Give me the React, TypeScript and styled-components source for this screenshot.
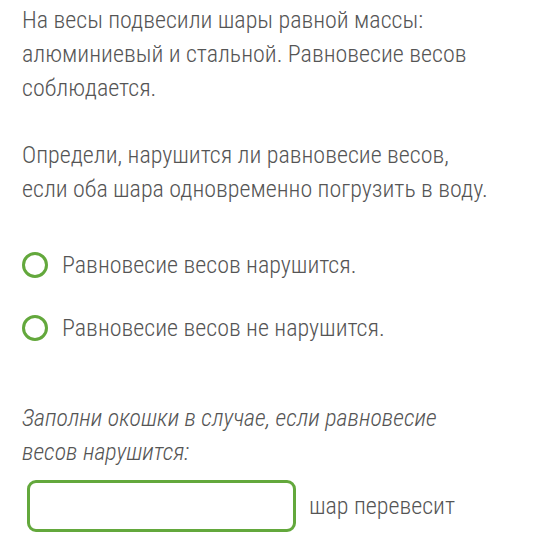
import React from "react";
import styled, { createGlobalStyle } from "styled-components";

const Global = createGlobalStyle`
  html, body { margin: 0; padding: 0; background: #fff; }
  body { font-family: Roboto, "Noto Sans", sans-serif; color: #555; }
`;

const Page = styled.div`
  width: 539px;
  height: 540px;
  box-sizing: border-box;
  padding: 3px 10px 0 22px;
  overflow: hidden;
  font-weight: 300;
  font-stretch: 75%;
  font-size: 24px;
  line-height: 34px;
`;

const Para = styled.p<{ $italic?: boolean; $mb?: number }>`
  margin: 0 0 ${(p) => p.$mb ?? 33}px 0;
  font-style: ${(p) => (p.$italic ? "italic" : "normal")};
`;

const Options = styled.div`
  display: flex;
  flex-direction: column;
  gap: 29px;
  margin: 42px 0 56px 0;
`;

const Option = styled.label`
  display: flex;
  align-items: center;
  gap: 14px;
  height: 34px;
`;

const Radio = styled.span`
  width: 26px;
  height: 26px;
  box-sizing: border-box;
  border: 3px solid #63a83c;
  border-radius: 50%;
  flex: none;
`;

const FillRow = styled.div`
  display: flex;
  align-items: center;
  gap: 13px;
  margin-top: 11px;
  padding-left: 5px;
`;

const Box = styled.div`
  width: 269px;
  height: 52px;
  box-sizing: border-box;
  border: 3px solid #63a83c;
  border-radius: 9px;
  flex: none;
`;

const Label = styled.span``;

export default function App() {
  return (
    <>
      <Global />
      <Page>
        <Para>
          На весы подвесили шары равной массы:
          <br />
          алюминиевый и стальной. Равновесие весов
          <br />
          соблюдается.
        </Para>
        <Para $mb={0}>
          Определи, нарушится ли равновесие весов,
          <br />
          если оба шара одновременно погрузить в воду.
        </Para>
        <Options>
          <Option>
            <Radio />
            Равновесие весов нарушится.
          </Option>
          <Option>
            <Radio />
            Равновесие весов не нарушится.
          </Option>
        </Options>
        <Para $italic $mb={0}>
          Заполни окошки в случае, если равновесие
          <br />
          весов нарушится:
        </Para>
        <FillRow>
          <Box />
          <Label>шар перевесит</Label>
        </FillRow>
      </Page>
    </>
  );
}
